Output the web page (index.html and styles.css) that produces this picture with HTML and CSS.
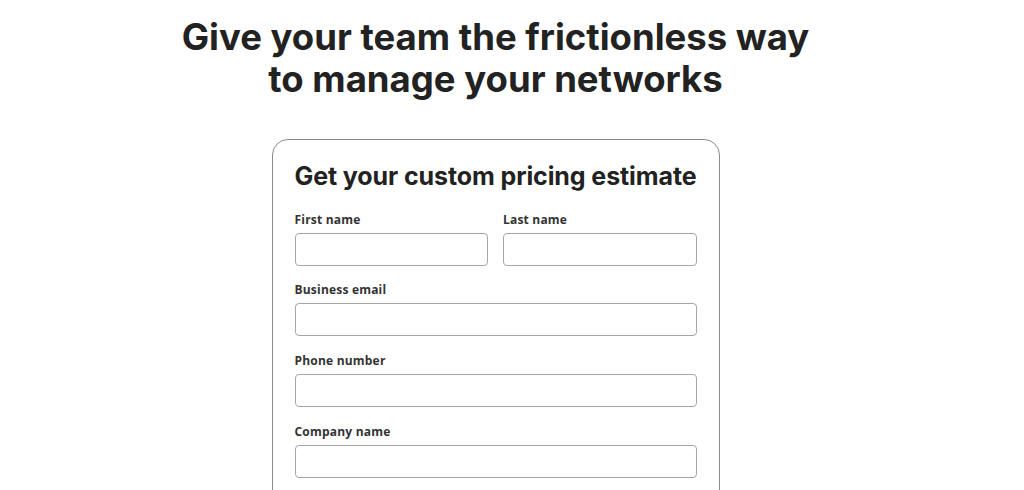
FILE: index.html
```html
<!DOCTYPE html>
<html lang="en">
<head>
  <meta charset="UTF-8" />
  <meta name="viewport" content="width=device-width, initial-scale=1.0"/>
  <title>Pricing estimate</title>
  <link rel="stylesheet" href="styles.css">
</head>
<body>
  <main class="page">
    <h1 class="hero-title">Give your team the frictionless way<br>to manage your networks</h1>

    <form class="card">
      <h2 class="card-title">Get your custom pricing estimate</h2>

      <div class="row">
        <div class="field">
          <label for="first">First name</label>
          <input id="first" type="text">
        </div>
        <div class="field">
          <label for="last">Last name</label>
          <input id="last" type="text">
        </div>
      </div>

      <div class="field">
        <label for="email">Business email</label>
        <input id="email" type="email">
      </div>

      <div class="field">
        <label for="phone">Phone number</label>
        <input id="phone" type="tel">
      </div>

      <div class="field">
        <label for="company">Company name</label>
        <input id="company" type="text">
      </div>
    </form>
  </main>
</body>
</html>
```

FILE: styles.css
```css
* {
  margin: 0;
  padding: 0;
  box-sizing: border-box;
}

html, body {
  width: 100%;
  height: 100%;
  background: #fff;
  color: #222;
  font-family: 'Inter', 'Noto Sans', sans-serif;
  overflow: hidden;
}

.page {
  width: 991px;
  display: flex;
  flex-direction: column;
  align-items: center;
  padding-top: 16px;
}

.hero-title {
  font-size: 36.5px;
  line-height: 42px;
  font-weight: 700;
  letter-spacing: 0;
  text-align: center;
  color: #222;
}

.card {
  margin-top: 39px;
  width: 448px;
  border: 1px solid #8c8c8c;
  border-radius: 16px;
  padding: 21px 22px 40px;
  display: flex;
  flex-direction: column;
  gap: 17.67px;
}

.card-title {
  font-size: 25px;
  line-height: 30px;
  font-weight: 700;
  letter-spacing: -0.1px;
  color: #222;
  margin-bottom: 4px;
}

.row {
  display: flex;
  gap: 15px;
}

.row .field {
  flex: 1;
}

.field {
  display: flex;
  flex-direction: column;
  gap: 6px;
}

.field label {
  font-family: 'Open Sans', 'Noto Sans', sans-serif;
  font-size: 12px;
  line-height: 14px;
  font-weight: 700;
  letter-spacing: 0.2px;
  color: #333;
}

.field input {
  height: 33px;
  width: 100%;
  border: 1px solid #a6a6a6;
  border-radius: 4px;
  background: #fff;
  font-size: 14px;
  padding: 0 10px;
}
```
